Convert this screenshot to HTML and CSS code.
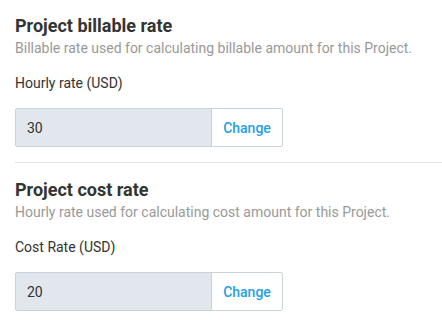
FILE: index.html
```html
<!DOCTYPE html>
<html lang="en">
<head>
    <meta charset="UTF-8">
    <meta name="viewport" content="width=device-width, initial-scale=1.0">
    <title>Project rates</title>
    <link rel="stylesheet" href="styles.css">
</head>
<body>
    <div class="section">
        <h2>Project billable rate</h2>
        <p class="desc">Billable rate used for calculating billable amount for this Project.</p>
        <label>Hourly rate (USD)</label>
        <div class="field">
            <input type="text" value="30" readonly>
            <button>Change</button>
        </div>
    </div>
    <div class="section last">
        <h2>Project cost rate</h2>
        <p class="desc">Hourly rate used for calculating cost amount for this Project.</p>
        <label>Cost Rate (USD)</label>
        <div class="field">
            <input type="text" value="20" readonly>
            <button>Change</button>
        </div>
    </div>
</body>
</html>
```

FILE: styles.css
```css
body {
    font-family: Roboto, "Liberation Sans", sans-serif;
    background-color: #fff;
    color: #333;
    margin: 0;
    padding: 15px 0 0 15px;
}
.section {
    padding-bottom: 15px;
    border-bottom: 1px solid #e4e4e4;
    margin-bottom: 16px;
}
.section.last {
    border-bottom: none;
    margin-bottom: 0;
}
h2 {
    font-size: 18px;
    line-height: 22px;
    font-weight: 700;
    margin: 0 0 3px;
    color: #333;
}
.desc {
    font-size: 14px;
    line-height: 17px;
    color: #999;
    margin: 0 0 18px;
}
label {
    display: block;
    font-size: 14px;
    line-height: 17px;
    margin-bottom: 16px;
}
.field {
    display: flex;
    width: 268px;
    height: 39px;
    box-sizing: border-box;
    border: 1px solid #c9d1d9;
    border-radius: 2px;
}
.field input {
    flex: 1;
    min-width: 0;
    border: none;
    border-right: 1px solid #c9d1d9;
    background-color: #e1e7ed;
    padding: 0 11px;
    font-family: inherit;
    font-size: 14px;
    color: #333;
    outline: none;
}
.field button {
    width: 70px;
    border: none;
    background: #fff;
    color: #1fa0e6;
    font-family: inherit;
    font-size: 14px;
    font-weight: 500;
    padding: 0;
    cursor: pointer;
}
```
